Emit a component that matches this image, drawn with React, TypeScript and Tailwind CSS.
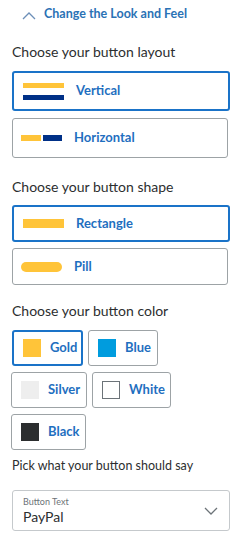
import React from "react";

type Option = { id: string; label: string; icon: React.ReactNode };

const layoutOptions: Option[] = [
  {
    id: "vertical",
    label: "Vertical",
    icon: (
      <div className="flex flex-col gap-[7px] w-[41px]">
        <div className="h-[5px] bg-[#ffc439]" />
        <div className="h-[5px] bg-[#003087]" />
      </div>
    ),
  },
  {
    id: "horizontal",
    label: "Horizontal",
    icon: (
      <div className="flex gap-[2px] w-[41px]">
        <div className="h-[6px] w-[20px] bg-[#ffc439]" />
        <div className="h-[6px] w-[19px] bg-[#003087]" />
      </div>
    ),
  },
];

const shapeOptions: Option[] = [
  {
    id: "rect",
    label: "Rectangle",
    icon: <div className="h-[9px] w-[41px] bg-[#ffc439]" />,
  },
  {
    id: "pill",
    label: "Pill",
    icon: <div className="h-[10px] w-[41px] rounded-full bg-[#ffc439]" />,
  },
];

const colors = [
  { id: "gold", label: "Gold", swatch: "bg-[#ffc439]", w: "w-[71px]" },
  { id: "blue", label: "Blue", swatch: "bg-[#009cde]", w: "w-[70px]" },
  { id: "silver", label: "Silver", swatch: "bg-[#eeeeee]", w: "w-[76px]" },
  { id: "white", label: "White", swatch: "bg-white border border-[#6c7378]", w: "w-[79px]" },
  { id: "black", label: "Black", swatch: "bg-[#2c2e2f]", w: "w-[75px]" },
];

function OptionBox({ option, selected, height }: { option: Option; selected: boolean; height: string }) {
  return (
    <div
      className={`flex items-center rounded-[3px] bg-white ${height} ${
        selected
          ? "w-[218px] border-2 border-[#1a73c8] pl-[9px]"
          : "w-[216px] border border-[#9da3a6] pl-[8px]"
      }`}
    >
      <div className="w-[41px] flex items-center">{option.icon}</div>
      <span className="ml-[12px] text-[13px] font-bold text-[#1f6fbf]">{option.label}</span>
    </div>
  );
}

function ColorBox({ c, selected }: { c: (typeof colors)[number]; selected: boolean }) {
  return (
    <div
      className={`flex items-center h-[36px] rounded-[3px] bg-white ${c.w} ${
        selected ? "border-2 border-[#1a73c8] pl-[9px]" : "border border-[#9da3a6] pl-[9px]"
      }`}
    >
      <div className={`w-[18px] h-[18px] ${c.swatch}`} />
      <span className="ml-[9px] text-[13px] font-bold text-[#1f6fbf]">{c.label}</span>
    </div>
  );
}

export default function App() {
  return (
    <div className="w-[249px] h-[552px] bg-white font-['Lato',sans-serif] text-[#2c2e2f]">
      <div className="flex items-center pt-[7px] pl-[22px] h-[21px]">
        <svg width="14" height="9" viewBox="0 0 14 9" fill="none" className="mt-[3px]">
          <path d="M1 8L7 2L13 8" stroke="#6c8fb8" strokeWidth="1.3" />
        </svg>
        <span className="ml-[8px] text-[12.5px] font-bold text-[#2a72b5]">Change the Look and Feel</span>
      </div>

      <div className="px-[12px]">
        <div className="mt-[22px] text-[14px] leading-[18px]">Choose your button layout</div>
        <div className="mt-[10px] flex flex-col gap-[7px]">
          <OptionBox option={layoutOptions[0]} selected height="h-[40px]" />
          <OptionBox option={layoutOptions[1]} selected={false} height="h-[40px]" />
        </div>

        <div className="mt-[20px] text-[14px] leading-[18px]">Choose your button shape</div>
        <div className="mt-[9px] flex flex-col gap-[6px]">
          <OptionBox option={shapeOptions[0]} selected height="h-[37px]" />
          <OptionBox option={shapeOptions[1]} selected={false} height="h-[37px]" />
        </div>

        <div className="mt-[17px] text-[14px] leading-[18px]">Choose your button color</div>
        <div className="mt-[10px] flex flex-col gap-[6px]">
          <div className="flex gap-[5px]">
            <ColorBox c={colors[0]} selected />
            <ColorBox c={colors[1]} selected={false} />
          </div>
          <div className="flex gap-[5px] -ml-[1px]">
            <ColorBox c={colors[2]} selected={false} />
            <ColorBox c={colors[3]} selected={false} />
          </div>
          <div className="flex -ml-[1px]">
            <ColorBox c={colors[4]} selected={false} />
          </div>
        </div>

        <div className="mt-[8px] text-[12.5px] leading-[16px]">Pick what your button should say</div>
        <div className="mt-[16px] w-[218px] h-[41px] rounded-[3px] border border-[#c5c9cc] flex items-center justify-between pl-[10px] pr-[11px]">
          <div className="flex flex-col">
            <span className="text-[9px] leading-[11px] text-[#6c7378]">Button Text</span>
            <span className="text-[14px] leading-[17px] mt-[1px]">PayPal</span>
          </div>
          <svg width="14" height="8" viewBox="0 0 14 8" fill="none">
            <path d="M1 1L7 7L13 1" stroke="#6c7378" strokeWidth="1.3" />
          </svg>
        </div>
      </div>
    </div>
  );
}
